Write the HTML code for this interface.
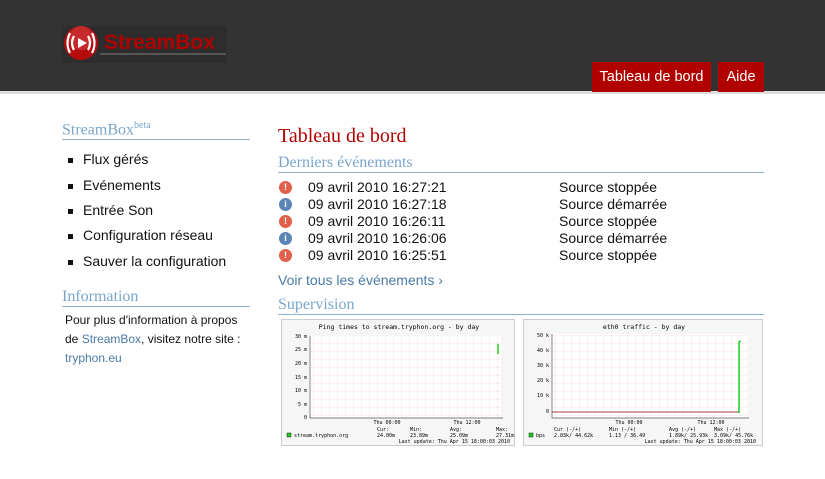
<!DOCTYPE html>
<html><head><meta charset="utf-8"><style>
*{margin:0;padding:0;box-sizing:border-box}
body{width:825px;height:479px;background:#fff;font-family:"Liberation Sans",sans-serif;color:#111;position:relative;overflow:hidden}
#hd{position:absolute;left:0;top:0;width:825px;height:91px;background:#333}
#hl{position:absolute;left:0;top:91px;width:825px;height:3px;background:#ddd}
.lbox{position:absolute;left:62px;top:26px;width:165px;height:37px;background:#2d2d2d}
.logo{position:absolute;left:63px;top:26px}
.logotxt{position:absolute;left:104px;top:31px;color:#b00000;font:bold 21px "Liberation Sans",sans-serif;letter-spacing:0}
.logoline{position:absolute;left:100px;top:53px;width:126px;height:2px;background:#555}
.btn{position:absolute;top:62px;height:30px;background:#b00000;color:#fff;font-size:14.5px;line-height:30px;text-align:center}
.side h3,.main h2{font-family:"Liberation Serif","DejaVu Serif",serif;font-weight:normal;color:#7aa6cc;font-size:16px;border-bottom:1px solid #8ab0d2}
.side{position:absolute;left:62px;top:120px;width:188px}
.side ul{list-style:none;margin:11px 0 10px 6px}
.side li{font-size:14px;height:25.3px;padding-left:15px;position:relative}
.side li:before{content:"";position:absolute;left:0;top:7px;width:5px;height:5px;background:#111}
.side p{font-size:12px;line-height:19px;padding:4px 0 0 3px}
.side p a,.main a{color:#4a7aa8;text-decoration:none}
.main{position:absolute;left:278px;top:125px;width:486px}
h1{font-family:"Liberation Serif","DejaVu Serif",serif;font-weight:normal;color:#b00000;font-size:20px;height:29px}
.ev{font-size:14px;height:17px;position:relative;padding-left:30px;white-space:nowrap}
.ev i{position:absolute;left:1px;top:2px;width:13px;height:13px;border-radius:50%;color:#fff;font:bold 9px sans-serif;text-align:center;line-height:13px;font-style:normal}
.r{background:#e0604c}.b{background:#5b85b8}
.ev span{position:absolute;left:281px}
.g{position:absolute;top:319px;border:1px solid #ccc;background:#f6f6f6}
</style></head><body>
<div id="hd"></div><div id="hl"></div>
<div class="lbox"></div>
<svg class="logo" width="38" height="38" viewBox="0 0 38 38"><circle cx="18" cy="17" r="17" fill="#b50c0c"/><circle cx="18" cy="12" r="12" fill="#d84a4a" opacity=".5"/><path d="M15 12 L24 17 L15 22Z" fill="#fff"/><path d="M11 10 Q7 17 11 24 M7 7 Q2 17 7 27 M25 10 Q29 17 25 24 M29 7 Q34 17 29 27" stroke="#fff" stroke-width="2.2" fill="none"/></svg>
<div class="logotxt">StreamBox</div><div class="logoline"></div>
<div class="btn" style="left:592px;width:119px">Tableau de bord</div>
<div class="btn" style="left:718px;width:46px">Aide</div>
<div class="side">
<h3>StreamBox<sup style="font-size:10px">beta</sup></h3>
<ul><li>Flux gérés</li><li>Evénements</li><li>Entrée Son</li><li>Configuration réseau</li><li>Sauver la configuration</li></ul>
<h3>Information</h3>
<p>Pour plus d'information à propos<br>de <a>StreamBox</a>, visitez notre site :<br><a>tryphon.eu</a></p>
</div>
<div class="main">
<h1>Tableau de bord</h1>
<h2 style="margin-bottom:6px">Derniers événements</h2>
<div class="ev"><i class="r">!</i>09 avril 2010 16:27:21<span>Source stoppée</span></div>
<div class="ev"><i class="b">i</i>09 avril 2010 16:27:18<span>Source démarrée</span></div>
<div class="ev"><i class="r">!</i>09 avril 2010 16:26:11<span>Source stoppée</span></div>
<div class="ev"><i class="b">i</i>09 avril 2010 16:26:06<span>Source démarrée</span></div>
<div class="ev"><i class="r">!</i>09 avril 2010 16:25:51<span>Source stoppée</span></div>
<div style="margin-top:8px;font-size:14px;height:24px"><a>Voir tous les événements ›</a></div>
<h2>Supervision</h2>
</div>
<svg class="g" style="left:281px" width="234" height="127" font-family="DejaVu Sans Mono,monospace" font-size="5">
<defs><pattern id="p1" width="8" height="8" patternUnits="userSpaceOnUse"><path d="M8 0V8M0 8H8" stroke="#f3c0c0" stroke-width=".5" fill="none"/></pattern></defs>
<text x="117" y="9" text-anchor="middle" font-size="6.5">Ping times to stream.tryphon.org - by day</text>
<rect x="28" y="16" width="191" height="82" fill="#fff"/><rect x="28" y="16" width="191" height="82" fill="url(#p1)"/>
<path d="M28 16V98H221" stroke="#555" stroke-width=".7" fill="none"/>
<g text-anchor="end"><text x="25" y="18">30 m</text><text x="25" y="31">25 m</text><text x="25" y="45">20 m</text><text x="25" y="59">15 m</text><text x="25" y="72">10 m</text><text x="25" y="86">5 m</text><text x="25" y="99">0</text></g>
<path d="M216 24V34" stroke="#2c2" stroke-width="1.5"/>
<text x="105" y="104" text-anchor="middle">Thu 00:00</text><text x="185" y="104" text-anchor="middle">Thu 12:00</text>
<rect x="5" y="113" width="4" height="4" fill="#2c2" stroke="#000" stroke-width=".4"/><text x="12" y="117">stream.tryphon.org</text>
<text x="95" y="111">Cur:</text><text x="95" y="117">24.00m</text><text x="128" y="111">Min:</text><text x="128" y="117">23.89m</text><text x="168" y="111">Avg:</text><text x="168" y="117">25.09m</text><text x="214" y="111">Max:</text><text x="214" y="117">27.31m</text>
<text x="228" y="123" text-anchor="end">Last update: Thu Apr 15 18:00:03 2010</text>
</svg>
<svg class="g" style="left:523px" width="240" height="127" font-family="DejaVu Sans Mono,monospace" font-size="5">
<defs><pattern id="p2" width="8" height="8" patternUnits="userSpaceOnUse"><path d="M8 0V8M0 8H8" stroke="#f3c0c0" stroke-width=".5" fill="none"/></pattern></defs>
<text x="120" y="9" text-anchor="middle" font-size="6.5">eth0 traffic - by day</text>
<rect x="28" y="14" width="195" height="84" fill="#fff"/><rect x="28" y="14" width="195" height="84" fill="url(#p2)"/>
<path d="M28 14V98H225" stroke="#555" stroke-width=".7" fill="none"/>
<path d="M28 92H215" stroke="#800" stroke-width=".8"/>
<g text-anchor="end"><text x="25" y="17">50 k</text><text x="25" y="32">40 k</text><text x="25" y="47">30 k</text><text x="25" y="62">20 k</text><text x="25" y="77">10 k</text><text x="25" y="93">0</text></g>
<path d="M215 93V22L217 21" stroke="#2c2" stroke-width="1.5" fill="none"/>
<text x="105" y="104" text-anchor="middle">Thu 00:00</text><text x="187" y="104" text-anchor="middle">Thu 12:00</text>
<rect x="5" y="113" width="4" height="4" fill="#2c2" stroke="#000" stroke-width=".4"/><text x="12" y="117">bps</text>
<text x="30" y="111">Cur (-/+)</text><text x="30" y="117">2.83k/ 44.62k</text><text x="85" y="111">Min (-/+)</text><text x="85" y="117">1.13 / 36.49</text><text x="145" y="111">Avg (-/+)</text><text x="145" y="117">1.89k/ 25.93k</text><text x="190" y="111">Max (-/+)</text><text x="190" y="117">3.09k/ 45.76k</text>
<text x="232" y="123" text-anchor="end">Last update: Thu Apr 15 18:00:03 2010</text>
</svg>
</body></html>
